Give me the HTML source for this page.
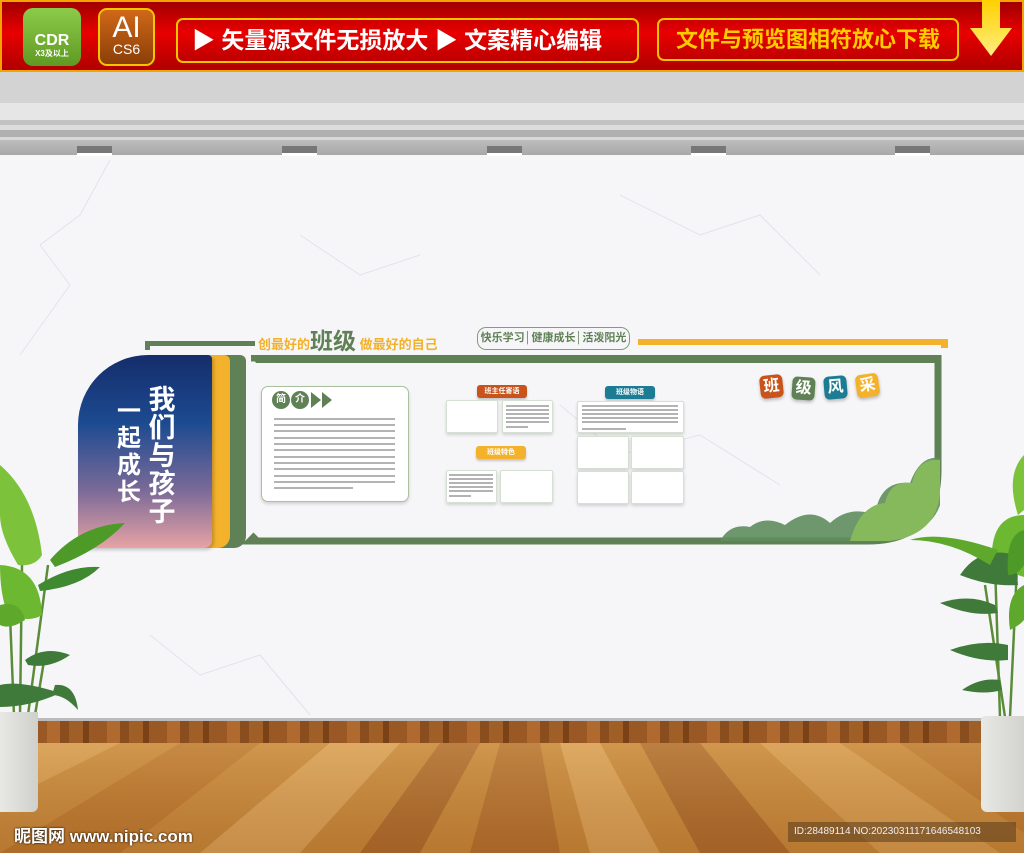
<!DOCTYPE html>
<html><head><meta charset="utf-8"><style>
*{margin:0;padding:0;box-sizing:border-box}
body{width:1024px;height:853px;position:relative;overflow:hidden;background:#f6f6f9;font-family:"Liberation Sans","Noto Sans CJK SC",sans-serif}
.a{position:absolute}
.cn{font-family:"Liberation Sans","Noto Sans CJK SC",sans-serif;font-weight:bold}
.box{position:absolute;background:#fff;border:1.5px solid #d6e0d2;border-radius:2px;box-shadow:0 2px 3px rgba(0,0,0,.15)}
.ln{position:absolute;height:2px;background:#b3b3b3}
.lbl{position:absolute;height:13px;border-radius:3px;color:#fff;font-size:7px;text-align:center;line-height:13px;font-weight:bold;box-shadow:0 2px 2px rgba(0,0,0,.2)}
.tile{position:absolute;width:23px;height:23px;border-radius:5px;color:#fff;font-size:16px;font-weight:bold;text-align:center;line-height:23px;box-shadow:0 2px 3px rgba(0,0,0,.25)}
</style></head><body>
<!-- top banner -->
<div class="a" style="left:0;top:0;width:1024px;height:72px;background:linear-gradient(#a00000,#e80000 45%,#b00000);border:2px solid #f5a300"></div>
<div class="a" style="left:23px;top:8px;width:58px;height:58px;border-radius:10px;background:linear-gradient(#8ccb4a,#5f9a22);color:#fff;text-align:center">
 <div style="font-size:16px;font-weight:bold;margin-top:24px;line-height:17px">CDR</div><div class="cn" style="font-size:8px;line-height:10px">X3及以上</div></div>
<div class="a" style="left:98px;top:8px;width:57px;height:58px;border-radius:9px;background:linear-gradient(#d06818,#8a3f08);border:2px solid #f7c500;color:#fff;text-align:center">
 <div style="font-size:30px;line-height:28px;margin-top:4px">AI</div><div style="font-size:14px;line-height:14px">CS6</div></div>
<div class="a cn" style="left:176px;top:18px;width:463px;height:45px;border:2px solid #f7c500;border-radius:7px;color:#fff;font-size:23px;line-height:41px;padding-left:14px">▶ 矢量源文件无损放大 ▶ 文案精心编辑</div>
<div class="a cn" style="left:657px;top:18px;width:302px;height:43px;border:2px solid #f7c500;border-radius:7px;color:#ffcc00;font-size:22px;line-height:39px;text-align:center">文件与预览图相符放心下载</div>
<svg class="a" style="left:968px;top:0" width="46" height="60"><defs><linearGradient id="ar" x1="0" y1="0" x2="0" y2="1"><stop offset="0" stop-color="#ffd000"/><stop offset="1" stop-color="#ffee80"/></linearGradient></defs><path d="M14 0H32V28H44L23 56 2 28H14Z" fill="url(#ar)"/></svg>
<!-- ceiling -->
<div class="a" style="left:0;top:72px;width:1024px;height:31px;background:#d3d3d3"></div>
<div class="a" style="left:0;top:103px;width:1024px;height:17px;background:#e6e6e6"></div>
<div class="a" style="left:0;top:120px;width:1024px;height:5px;background:#c2c2c2"></div>
<div class="a" style="left:0;top:125px;width:1024px;height:5px;background:#dcdcdc"></div>
<div class="a" style="left:0;top:130px;width:1024px;height:7px;background:#b0b0b0"></div>
<div class="a" style="left:0;top:137px;width:1024px;height:3px;background:#d8d8d8"></div>
<div class="a" style="left:0;top:140px;width:1024px;height:15px;background:linear-gradient(#bdbdbd,#a8a8a8)"></div>
<div class="a" style="left:77px;top:146px;width:35px;height:10px;background:#777;border-bottom:3px solid #fff"></div>
<div class="a" style="left:282px;top:146px;width:35px;height:10px;background:#777;border-bottom:3px solid #fff"></div>
<div class="a" style="left:487px;top:146px;width:35px;height:10px;background:#777;border-bottom:3px solid #fff"></div>
<div class="a" style="left:691px;top:146px;width:35px;height:10px;background:#777;border-bottom:3px solid #fff"></div>
<div class="a" style="left:895px;top:146px;width:35px;height:10px;background:#777;border-bottom:3px solid #fff"></div>
<!-- marble veins -->
<svg class="a" style="left:0;top:155px" width="1024" height="565"><g stroke="#d8d4e2" stroke-width="1" fill="none" opacity=".6"><path d="M110 5L80 60 40 90 70 130 20 200"/><path d="M620 40L700 80 760 60 820 120"/><path d="M560 250L620 300 700 280 780 330"/><path d="M150 480L200 520 260 500 310 560"/><path d="M300 80L360 120 420 100"/></g></svg>
<!-- floor -->
<div class="a" style="left:0;top:718px;width:1024px;height:3px;background:#bbb"></div>
<div class="a" style="left:0;top:721px;width:1024px;height:22px;background:repeating-linear-gradient(90deg,#8a4d1e 0 9px,#a15f28 9px 23px,#7b4218 23px 29px,#9a5824 29px 47px,#b06a30 47px 60px)"></div>
<svg class="a" style="left:0;top:743px" width="1024" height="110" preserveAspectRatio="none">
 <rect width="1024" height="110" fill="#c48438"/>
 <g opacity=".9">
 <path d="M0 0H120L0 60Z" fill="#d49a50"/><path d="M180 0H260L120 110H0Z" fill="#b8742c"/><path d="M330 0H400L300 110H200Z" fill="#d8a058"/><path d="M440 0H480L420 110H360Z" fill="#a9662a"/>
 <path d="M500 0H540L560 110H470Z" fill="#b06c2c"/><path d="M560 0H600L660 110H590Z" fill="#d8a058"/><path d="M640 0H700L790 110H700Z" fill="#a9662a"/><path d="M760 0H840L1000 110H880Z" fill="#d49a50"/><path d="M900 0H1024V90Z" fill="#b8742c"/>
 </g>
 <rect width="1024" height="110" fill="url(#fg)"/>
 <defs><linearGradient id="fg" x1="0" y1="0" x2="0" y2="1"><stop offset="0" stop-color="#ffe0a0" stop-opacity=".2"/><stop offset="1" stop-color="#703808" stop-opacity=".15"/></linearGradient></defs>
</svg>
<div class="a cn" style="left:14px;top:822px;color:#fff;font-size:17px;text-shadow:0 0 2px #000">昵图网 <span>www.nipic.com</span></div>
<div class="a" style="left:788px;top:822px;width:228px;height:20px;background:rgba(90,60,30,.55);color:#eee;font-size:10px;line-height:20px;padding-left:6px">ID:28489114 NO:20230311171646548103</div>
<!-- panel -->
<div class="a" style="left:145px;top:341px;width:110px;height:5px;background:#5f8155"></div>
<div class="a" style="left:145px;top:341px;width:5px;height:9px;background:#5f8155"></div>
<div class="a cn" style="left:258px;top:328px;color:#f3b12a;font-size:13px;line-height:26px;white-space:nowrap">创最好的<span style="color:#5f8155;font-size:23px">班级</span> 做最好的自己</div>
<div class="a cn" style="left:477px;top:327px;width:153px;height:23px;border:1.5px solid #7f9f76;border-radius:9px;color:#5f8155;font-size:11px;line-height:20px;text-align:center;white-space:nowrap">快乐学习│健康成长│活泼阳光</div>
<div class="a" style="left:638px;top:339px;width:309px;height:6px;background:#f4b22c"></div>
<div class="a" style="left:941px;top:339px;width:7px;height:9px;background:#f4b22c"></div>
<svg class="a" style="left:240px;top:355px" width="712" height="195">
 <path d="M11 3H698V115Q698 186 628 186H10L16 180" fill="none" stroke="#5f8155" stroke-width="7"/>
 <path d="M11 0L16 8H700V0Z" fill="#5f8155"/>
 <path d="M480 186Q490 168 510 172Q525 160 545 170Q570 150 590 168Q610 150 635 160Q640 125 670 128Q680 100 700 103V150Q690 180 640 186Z" fill="#5f8d5e" opacity=".9"/>
 <path d="M610 186Q620 150 645 148Q650 125 672 128Q678 102 700 105V140Q695 180 650 186Z" fill="#86b85c"/>
</svg>
<!-- left block -->
<div class="a" style="left:212px;top:355px;width:34px;height:193px;background:#5f8155;border-radius:0 6px 12px 0"></div>
<div class="a" style="left:205px;top:355px;width:25px;height:193px;background:#f4b22c;border-radius:0 6px 12px 0"></div>
<div class="a" style="left:78px;top:355px;width:134px;height:193px;border-radius:70px 4px 8px 4px;background:linear-gradient(#152d6b,#1c4a90 35%,#7a6a98 70%,#e7a2a4);box-shadow:2px 2px 3px rgba(0,0,0,.2)"></div>
<div class="a cn" style="left:144px;top:386px;width:36px;color:#fff;font-size:27px;line-height:28px;text-align:center">我<br>们<br>与<br>孩<br>子</div>
<div class="a cn" style="left:113px;top:398px;width:32px;color:#fff;font-size:24px;line-height:27px;text-align:center">一<br>起<br>成<br>长</div>
<!-- intro -->
<div class="box" style="left:261px;top:386px;width:148px;height:116px;border-radius:7px;border-color:#a9c19e"></div>
<div class="a cn" style="left:272px;top:391px;width:18px;height:18px;border-radius:50%;background:#5f8155;color:#fff;font-size:10px;text-align:center;line-height:18px">简</div>
<div class="a cn" style="left:291px;top:391px;width:18px;height:18px;border-radius:50%;background:#5f8155;color:#fff;font-size:10px;text-align:center;line-height:18px">介</div>
<svg class="a" style="left:311px;top:392px" width="24" height="16"><path d="M0 0L10 8 0 16ZM11 0L21 8 11 16Z" fill="#5f8155"/></svg>
<div class="ln" style="left:274px;top:418px;width:121px"></div><div class="ln" style="left:274px;top:424px;width:121px"></div><div class="ln" style="left:274px;top:430px;width:121px"></div><div class="ln" style="left:274px;top:437px;width:121px"></div><div class="ln" style="left:274px;top:443px;width:121px"></div><div class="ln" style="left:274px;top:449px;width:121px"></div><div class="ln" style="left:274px;top:456px;width:121px"></div><div class="ln" style="left:274px;top:462px;width:121px"></div><div class="ln" style="left:274px;top:468px;width:121px"></div><div class="ln" style="left:274px;top:475px;width:121px"></div><div class="ln" style="left:274px;top:481px;width:121px"></div><div class="ln" style="left:274px;top:487px;width:79px"></div>
<!-- middle -->
<div class="lbl cn" style="left:477px;top:385px;width:50px;background:#c8541b">班主任寄语</div>
<div class="box" style="left:446px;top:400px;width:52px;height:33px"></div>
<div class="box" style="left:502px;top:400px;width:51px;height:33px"></div>
<div class="ln" style="left:506px;top:405px;width:43px;height:1.5px"></div><div class="ln" style="left:506px;top:409px;width:43px;height:1.5px"></div><div class="ln" style="left:506px;top:413px;width:43px;height:1.5px"></div><div class="ln" style="left:506px;top:417px;width:43px;height:1.5px"></div><div class="ln" style="left:506px;top:421px;width:43px;height:1.5px"></div><div class="ln" style="left:506px;top:426px;width:22px;height:1.5px"></div>
<div class="lbl cn" style="left:476px;top:446px;width:50px;background:#f4b22c">班级特色</div>
<div class="box" style="left:446px;top:470px;width:51px;height:33px"></div>
<div class="box" style="left:500px;top:470px;width:53px;height:33px"></div>
<div class="ln" style="left:449px;top:474px;width:44px;height:1.5px"></div><div class="ln" style="left:449px;top:478px;width:44px;height:1.5px"></div><div class="ln" style="left:449px;top:482px;width:44px;height:1.5px"></div><div class="ln" style="left:449px;top:486px;width:44px;height:1.5px"></div><div class="ln" style="left:449px;top:490px;width:44px;height:1.5px"></div><div class="ln" style="left:449px;top:495px;width:22px;height:1.5px"></div>
<div class="lbl cn" style="left:605px;top:386px;width:50px;background:#1b7c94">班级物语</div>
<div class="box" style="left:577px;top:401px;width:107px;height:32px"></div>
<div class="ln" style="left:582px;top:405px;width:96px;height:1.5px"></div><div class="ln" style="left:582px;top:409px;width:96px;height:1.5px"></div><div class="ln" style="left:582px;top:413px;width:96px;height:1.5px"></div><div class="ln" style="left:582px;top:417px;width:96px;height:1.5px"></div><div class="ln" style="left:582px;top:421px;width:96px;height:1.5px"></div><div class="ln" style="left:582px;top:428px;width:44px;height:1.5px"></div>
<div class="box" style="left:577px;top:436px;width:52px;height:33px"></div>
<div class="box" style="left:631px;top:436px;width:53px;height:33px"></div>
<div class="box" style="left:577px;top:471px;width:52px;height:33px"></div>
<div class="box" style="left:631px;top:471px;width:53px;height:33px"></div>
<div class="tile cn" style="left:760px;top:375px;background:#c8541b;transform:rotate(-6deg)">班</div>
<div class="tile cn" style="left:792px;top:377px;background:#5f8155;transform:rotate(4deg)">级</div>
<div class="tile cn" style="left:824px;top:376px;background:#1b7c94;transform:rotate(-5deg)">风</div>
<div class="tile cn" style="left:856px;top:374px;background:#f4b22c;transform:rotate(-8deg)">采</div>
<!-- plants -->
<svg class="a" style="left:0;top:455px" width="130" height="290">
 <g stroke="#5a8c3a" stroke-width="2.5" fill="none"><path d="M20 260L22 110"/><path d="M28 260L48 110"/><path d="M35 260L45 200"/><path d="M14 260L10 160"/></g>
 <path d="M0 10Q35 40 42 100Q35 112 18 110Q0 80 0 60Z" fill="#7cc23a"/>
 <path d="M0 110Q40 112 42 160Q30 168 8 160Q0 140 0 110Z" fill="#6cb830"/>
 <path d="M50 105Q80 70 125 68Q100 95 55 112Z" fill="#4e9a28"/>
 <path d="M38 130Q70 110 100 112Q80 132 40 136Z" fill="#3f8a30"/>
 <path d="M0 150Q20 145 25 165Q10 175 0 170Z" fill="#5ea82c"/>
 <path d="M25 205Q45 190 70 200Q50 214 28 210Z" fill="#3f7a3a"/>
 <path d="M0 230Q20 225 60 238Q30 252 0 252Z" fill="#3f7a3a"/>
 <path d="M55 230Q75 228 78 255Q65 240 52 240Z" fill="#3f7a3a"/>
</svg>
<div class="a" style="left:0;top:712px;width:38px;height:100px;background:linear-gradient(90deg,#e8e8e4,#cfcfcb);border-radius:0 0 6px 0"></div>
<svg class="a" style="left:900px;top:455px" width="124" height="265">
 <g stroke="#5a8c3a" stroke-width="2.5" fill="none"><path d="M100 262L95 110"/><path d="M110 262L118 90"/><path d="M105 262L85 130"/></g>
 <path d="M124 0Q105 20 118 60L124 55Z" fill="#7cc23a"/>
 <path d="M124 60Q95 60 92 95Q100 115 124 122Z" fill="#6cb830"/>
 <path d="M115 100Q80 90 60 120Q90 132 118 130Z" fill="#3f7a3a"/>
 <path d="M95 150Q70 138 40 148Q70 162 98 158Z" fill="#3f7a3a"/>
 <path d="M10 85Q40 75 98 95Q95 100 90 110Q50 85 10 85Z" fill="#5ea82c"/>
 <path d="M108 190Q80 184 50 195Q80 208 108 205Z" fill="#3f7a3a"/>
 <path d="M124 75Q105 80 108 120Q118 120 124 110Z" fill="#4e9a28"/>
 <path d="M124 130Q105 140 110 175Q120 170 124 165Z" fill="#5ea82c"/>
 <path d="M100 225Q80 222 62 235Q85 240 102 235Z" fill="#3f7a3a"/>
</svg>
<div class="a" style="left:981px;top:716px;width:43px;height:96px;background:linear-gradient(90deg,#e8e8e4,#d2d2ce);border-radius:4px 0 0 6px"></div>
</body></html>
